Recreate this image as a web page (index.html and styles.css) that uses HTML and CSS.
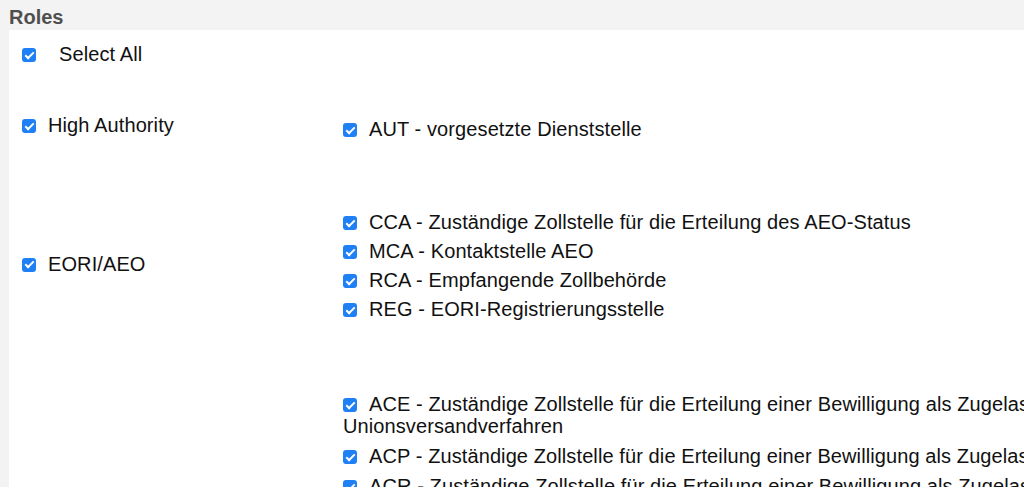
FILE: index.html
```html
<!DOCTYPE html>
<html lang="de">
<head>
<meta charset="utf-8">
<title>Roles</title>
<link rel="stylesheet" href="styles.css">
</head>
<body>
<div class="page">
  <h2 class="title">Roles</h2>
  <div class="panel">
    <div class="select-all">
      <label><input type="checkbox" class="cb" checked><span class="select-all-text">Select All</span></label>
    </div>

    <div class="group">
      <label class="group-label"><input type="checkbox" class="cb" checked>High Authority</label>
      <ul class="roles">
        <li><label><input type="checkbox" class="cb" checked>AUT - vorgesetzte Dienststelle</label></li>
      </ul>
    </div>

    <div class="group">
      <label class="group-label group-label-low"><input type="checkbox" class="cb" checked>EORI/AEO</label>
      <ul class="roles">
        <li><label><input type="checkbox" class="cb" checked>CCA - Zuständige Zollstelle für die Erteilung des AEO-Status</label></li>
        <li><label><input type="checkbox" class="cb" checked>MCA - Kontaktstelle AEO</label></li>
        <li><label><input type="checkbox" class="cb" checked>RCA - Empfangende Zollbehörde</label></li>
        <li><label><input type="checkbox" class="cb" checked>REG - EORI-Registrierungsstelle</label></li>
      </ul>
    </div>

    <div class="group">
      <label class="group-label"><input type="checkbox" class="cb" checked>Transit</label>
      <ul class="roles roles-long">
        <li><label><input type="checkbox" class="cb" checked>ACE - Zuständige Zollstelle für die Erteilung einer Bewilligung als Zugelassener Empfänger im Unionsversandverfahren</label></li>
        <li><label><input type="checkbox" class="cb" checked>ACP - Zuständige Zollstelle für die Erteilung einer Bewilligung als Zugelassener Versender</label></li>
        <li><label><input type="checkbox" class="cb" checked>ACR - Zuständige Zollstelle für die Erteilung einer Bewilligung als Zugelassener Empfänger</label></li>
        <li><label><input type="checkbox" class="cb" checked>ACT - Zuständige Zollstelle für die Erteilung einer Bewilligung für besondere Verschlüsse</label></li>
        <li><label><input type="checkbox" class="cb" checked>CGU - Zuständige Zollstelle für die Erteilung einer Bewilligung einer Gesamtsicherheit</label></li>
        <li><label><input type="checkbox" class="cb" checked>TRD - Zuständige Zollstelle für elektronische Beförderungsdokumente</label></li>
        <li><label><input type="checkbox" class="cb" checked>DES - Bestimmungszollstelle</label></li>
        <li><label><input type="checkbox" class="cb" checked>DEP - Abgangszollstelle</label></li>
      </ul>
    </div>
  </div>
</div>
</body>
</html>
```

FILE: styles.css
```css
html, body {
  margin: 0;
  padding: 0;
  overflow: hidden;
}

body {
  background: #f3f3f3;
  font-family: "Liberation Sans", Arial, Helvetica, sans-serif;
  font-size: 20px;
  letter-spacing: 0.1px;
  color: #111;
}

.page {
  width: 1400px;
}

.title {
  margin: 0;
  padding: 5px 9px 0;
  font-size: 20px;
  line-height: 25px;
  font-weight: bold;
  letter-spacing: 0;
  color: #4f4f4f;
}

.panel {
  margin-left: 9px;
  background: #fff;
  line-height: 21px;
}

.select-all {
  padding: 14px 0 14px 13px;
}

.select-all-text {
  margin-left: 11px;
}

.group {
  display: grid;
  grid-template-columns: 334px 1fr;
  align-items: center;
}

.group-label {
  padding-left: 13px;
}

.group-label-low {
  padding-top: 4px;
}

.roles {
  list-style: none;
  margin: 0;
  padding: 32px 0;
}

.roles li {
  margin-top: 8px;
}

.roles-long {
  line-height: 22px;
  padding-top: 33px;
}

.cb {
  appearance: none;
  -webkit-appearance: none;
  position: relative;
  display: inline-block;
  width: 14px;
  height: 14px;
  margin: 0 12px 0 0;
  border-radius: 3px;
  background: #1f7ff5;
  vertical-align: -1px;
}

.cb::after {
  content: "";
  position: absolute;
  left: 4.5px;
  top: 1.5px;
  width: 3px;
  height: 7px;
  border: solid #fff;
  border-width: 0 2px 2px 0;
  transform: rotate(45deg);
}
```
